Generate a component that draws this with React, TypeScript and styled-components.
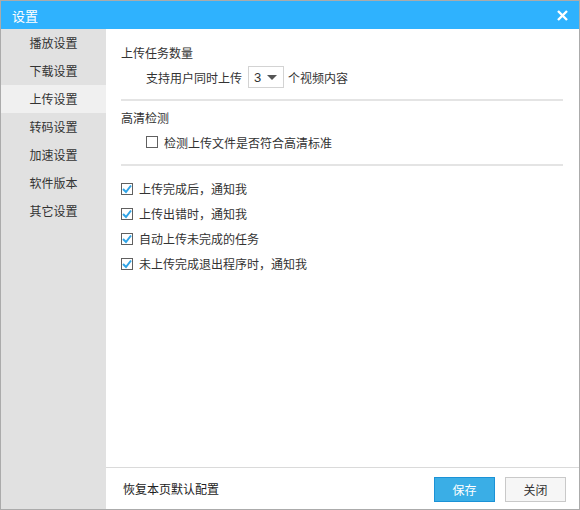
import styled, { createGlobalStyle } from "styled-components";

const GlobalStyle = createGlobalStyle`
  html, body {
    margin: 0;
    padding: 0;
    background: #ffffff;
  }
  * {
    box-sizing: border-box;
  }
  body {
    font-family: "Noto Sans CJK SC", "Noto Sans", sans-serif;
    font-size: 12px;
    color: #333;
  }
`;

const Frame = styled.div`
  width: 580px;
  height: 510px;
  border: 1px solid #ababab;
  display: flex;
  flex-direction: column;
  background: #fff;
`;

const TitleBar = styled.div`
  height: 28px;
  background: #2fb2fe;
  display: flex;
  align-items: center;
  justify-content: space-between;
  padding: 0 11px 0 11px;
  color: #fff;
  font-size: 13px;
  flex-shrink: 0;
`;

const CloseIcon = styled.svg`
  width: 11px;
  height: 11px;
  display: block;
`;

const Body = styled.div`
  flex: 1;
  display: flex;
  min-height: 0;
`;

const Sidebar = styled.div`
  width: 105px;
  background: #e1e1e1;
  display: flex;
  flex-direction: column;
  flex-shrink: 0;
`;

const NavItem = styled.div<{ $active?: boolean }>`
  height: 28px;
  line-height: 28px;
  text-align: center;
  color: #333;
  background: ${(p) => (p.$active ? "#f0f0f0" : "transparent")};
`;

const Main = styled.div`
  flex: 1;
  display: flex;
  flex-direction: column;
`;

const Content = styled.div`
  flex: 1;
  padding: 14px 16px 0 15px;
`;

const Heading = styled.div`
  line-height: 20px;
  color: #333;
`;

const Row = styled.div<{ $indent?: number }>`
  display: flex;
  align-items: center;
  padding-left: ${(p) => p.$indent ?? 0}px;
  gap: 4px;
`;

const SelectBox = styled.div`
  width: 36px;
  height: 22px;
  border: 1px solid #d3d3d3;
  display: flex;
  align-items: center;
  justify-content: space-between;
  padding: 0 6px 0 5px;
  color: #333;
  font-family: "Liberation Sans", Arial, sans-serif;
  font-size: 13px;
  margin: 0 0 0 2px;
`;

const Caret = styled.span`
  width: 0;
  height: 0;
  border-left: 5px solid transparent;
  border-right: 5px solid transparent;
  border-top: 5px solid #555;
`;

const Divider = styled.div<{ $top: number }>`
  height: 2px;
  background: #e4e4e4;
  margin-top: ${(p) => p.$top}px;
`;

const Box = styled.span`
  width: 12px;
  height: 12px;
  border: 1px solid #606060;
  background: #fff;
  display: inline-flex;
  align-items: center;
  justify-content: center;
  flex-shrink: 0;
  margin-right: 2px;
`;

const CheckRow = styled.label<{ $height: number }>`
  display: flex;
  align-items: center;
  gap: 4px;
  height: ${(p) => p.$height}px;
`;

const Footer = styled.div`
  height: 42px;
  border-top: 1px solid #dadada;
  display: flex;
  align-items: center;
  justify-content: space-between;
  padding: 0 13px 0 17px;
  flex-shrink: 0;
`;

const ResetLink = styled.span`
  color: #222;
`;

const Buttons = styled.div`
  display: flex;
  gap: 10px;
  margin-top: 1px;
`;

const Button = styled.button<{ $primary?: boolean }>`
  width: 61px;
  height: 25px;
  font-family: inherit;
  font-size: 12px;
  padding: 0;
  border: 1px solid ${(p) => (p.$primary ? "#1b92d6" : "#c9c9c9")};
  background: ${(p) => (p.$primary ? "#3aaee6" : "#f6f6f6")};
  color: ${(p) => (p.$primary ? "#fff" : "#333")};
`;

const Check = ({ checked }: { checked: boolean }) => (
  <Box>
    {checked && (
      <svg width="10" height="10" viewBox="0 0 10 10">
        <path d="M1 5 L4 8 L9 1.5" fill="none" stroke="#2fa4e7" strokeWidth="2" />
      </svg>
    )}
  </Box>
);

const navItems = ["播放设置", "下载设置", "上传设置", "转码设置", "加速设置", "软件版本", "其它设置"];

const notices = [
  "上传完成后，通知我",
  "上传出错时，通知我",
  "自动上传未完成的任务",
  "未上传完成退出程序时，通知我",
];

const App = () => {
  return (
    <>
      <GlobalStyle />
      <Frame>
        <TitleBar>
          <span>设置</span>
          <CloseIcon viewBox="0 0 11 11">
            <path d="M1 1 L10 10 M10 1 L1 10" stroke="#fff" strokeWidth="2.4" />
          </CloseIcon>
        </TitleBar>
        <Body>
          <Sidebar>
            {navItems.map((item) => (
              <NavItem key={item} $active={item === "上传设置"}>
                {item}
              </NavItem>
            ))}
          </Sidebar>
          <Main>
            <Content>
              <Heading>上传任务数量</Heading>
              <Row $indent={25} style={{ marginTop: 3 }}>
                <span>支持用户同时上传</span>
                <SelectBox>
                  <span>3</span>
                  <Caret />
                </SelectBox>
                <span>个视频内容</span>
              </Row>
              <Divider $top={11} />
              <Heading style={{ marginTop: 7 }}>高清检测</Heading>
              <CheckRow $height={20} style={{ marginTop: 4, paddingLeft: 25 }}>
                <Check checked={false} />
                <span>检测上传文件是否符合高清标准</span>
              </CheckRow>
              <Divider $top={12} />
              <div style={{ marginTop: 10 }}>
                {notices.map((n) => (
                  <CheckRow key={n} $height={25}>
                    <Check checked />
                    <span>{n}</span>
                  </CheckRow>
                ))}
              </div>
            </Content>
            <Footer>
              <ResetLink>恢复本页默认配置</ResetLink>
              <Buttons>
                <Button $primary>保存</Button>
                <Button>关闭</Button>
              </Buttons>
            </Footer>
          </Main>
        </Body>
      </Frame>
    </>
  );
};

export default App;
